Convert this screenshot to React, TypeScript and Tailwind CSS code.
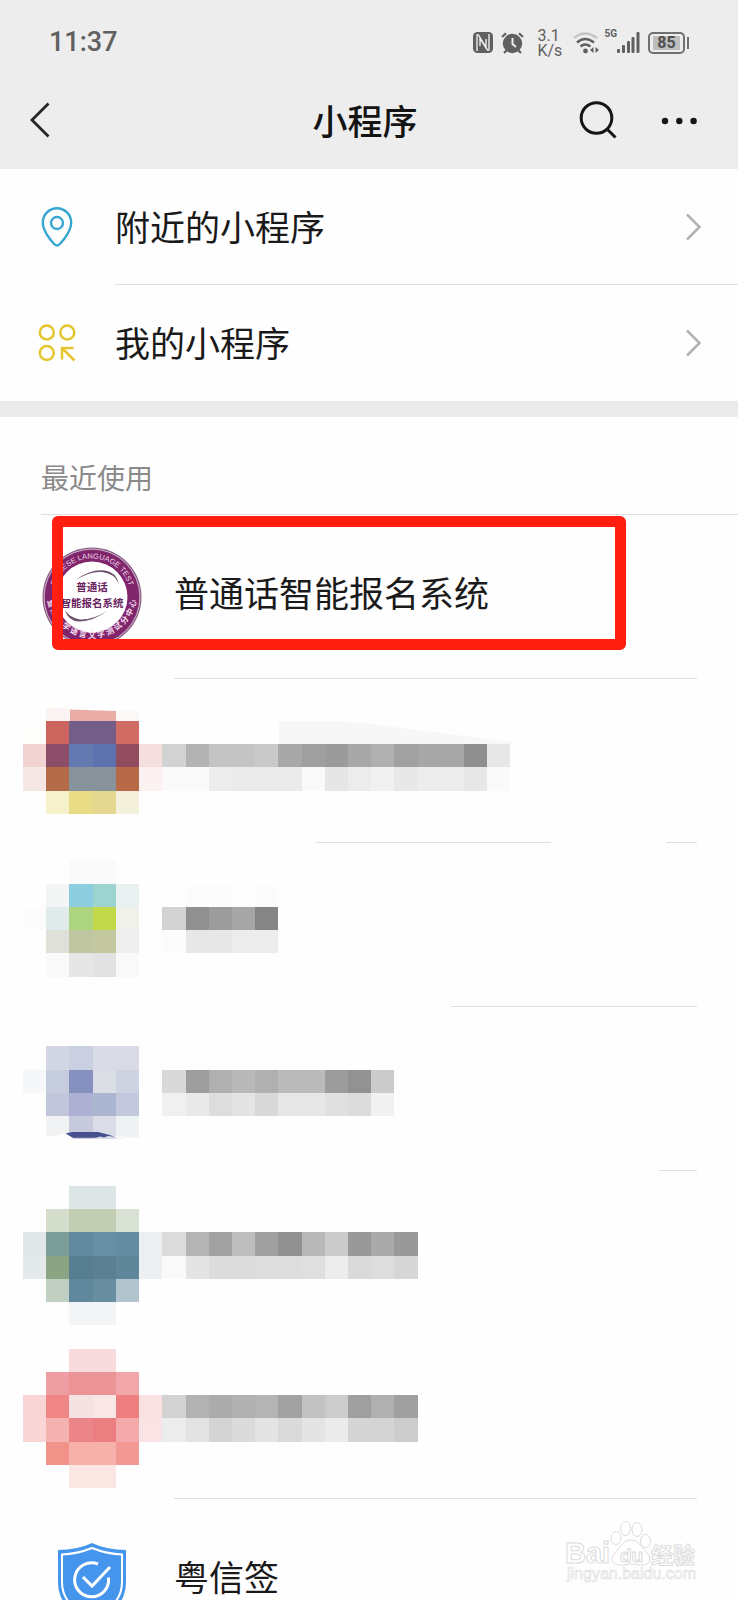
import React from "react";

type Cell = string | null;

interface HiddenApp {
  id: string;
  top: number;
  avatarRow: number;
  avatar: Cell[][];
  nameRow: number;
  name: Cell[][];
  divider: React.ReactNode;
}

const CELL_W = 23.2;
const CELL_H = 23.25;

const line = "h-px bg-[#dedede]";

const hiddenApps: HiddenApp[] = [
  {
    id: "a",
    top: 679,
    avatarRow: 31,
    avatar: [
      ["#fdfdfc", "#cc655d", "#735e88", "#735e88", "#d06c64", null],
      ["#f2d3d1", "#8b4d67", "#6379b0", "#5b72ae", "#914c60", "#f5dfdf"],
      ["#f5e7e4", "#b46b48", "#87929a", "#87929a", "#b86a48", "#faf1f0"],
      [null, "#f5f1cb", "#e8dc86", "#e4d890", "#f3f1dc", null],
    ],
    nameRow: 32,
    name: [
      ["#d2d2d2", "#b3b3b3", "#c4c4c4", "#c4c4c4", "#c9c9c9", "#a8a8a8", "#9f9f9f", "#9b9b9b", "#a8a8a8", "#b0b0b0", "#a1a1a1", "#a7a7a7", "#a7a7a7", "#8f8f8f", "#e7e7e7"],
      ["#fafafa", "#fafafa", "#ededed", "#ebebeb", "#ebebeb", "#ebebeb", "#f9f9f9", "#e6e6e6", "#ececec", "#f1f1f1", "#e8e8e8", "#ededed", "#ececec", "#e7e7e7", "#fafafa"],
    ],
    divider: (
      <>
        <span className={`${line} ml-[316px] w-[235px]`} />
        <span className={`${line} ml-auto mr-[41px] w-[31px]`} />
      </>
    ),
  },
  {
    id: "b",
    top: 843,
    avatarRow: 37,
    avatar: [
      [null, null, "#fafafa", "#fafafa", null, null],
      [null, "#f3f4f4", "#8ccde0", "#9ed4cf", "#e8f1ef", null],
      ["#fcfcfc", "#e2ebeb", "#add57f", "#c3d94c", "#f0f1ea", null],
      ["#fdfdfd", "#dfe0d8", "#c1c6a2", "#c3c8a1", "#eeeeee", null],
      [null, "#f9f9f9", "#e6e6e6", "#e2e2e2", "#f9f9f9", null],
    ],
    nameRow: 38,
    name: [
      [null, "#fcfcfc", "#fcfcfc", "#fdfdfd", "#fcfcfc"],
      ["#d2d2d2", "#909090", "#9c9c9c", "#a6a6a6", "#858585"],
      ["#fcfcfc", "#e7e7e7", "#e7e7e7", "#ececec", "#ededed"],
    ],
    divider: <span className={`${line} ml-[451px] mr-[41px] flex-1`} />,
  },
  {
    id: "c",
    top: 1007,
    avatarRow: 45,
    avatar: [
      [null, "#d2d5e3", "#cbd0e0", "#d9dbe6", "#d8dae6", null],
      ["#f6f7f8", "#c5ccdc", "#8590be", "#dcdee6", "#ced3e1", null],
      [null, "#c1c6da", "#aeb0d3", "#acb5cf", "#c4c8dc", null],
      [null, "#f0f2f3", "#c7c9dd", "#dadce7", "#eff2f5", null],
    ],
    nameRow: 46,
    name: [
      ["#d9d9d9", "#9e9e9e", "#b0b0b0", "#b9b9b9", "#b0b0b0", "#bbbbbb", "#bbbbbb", "#9c9c9c", "#929292", "#cbcbcb"],
      ["#f0f0f0", "#e9e9e9", "#dddddd", "#e4e4e4", "#d9d9d9", "#e7e7e7", "#e7e7e7", "#e0e0e0", "#dcdcdc", "#f1f1f1"],
    ],
    divider: <span className={`${line} ml-auto mr-[41px] w-[38px]`} />,
  },
  {
    id: "d",
    top: 1171,
    avatarRow: 51,
    avatar: [
      [null, null, "#dde5e7", "#dde5e7", null, null],
      [null, "#d5decc", "#c3cdb2", "#c3cdb2", "#d8e1d3", null],
      ["#e1e7e9", "#7b9f98", "#6189a0", "#678ea2", "#648ba1", "#ebeff2"],
      ["#e4e9eb", "#8ba584", "#567d90", "#5b8093", "#60869a", "#ecf0f3"],
      [null, "#c1d0c3", "#5f889c", "#688da1", "#b1c4cd", null],
      [null, null, "#f2f4f5", "#f2f4f5", null, null],
    ],
    nameRow: 53,
    name: [
      ["#dcdcdc", "#b4b4b4", "#a2a2a2", "#bebebe", "#a0a0a0", "#919191", "#b9b9b9", "#cbcbcb", "#999999", "#aaaaaa", "#999999"],
      ["#f9f9f9", "#e4e4e4", "#dcdcdc", "#dcdcdc", "#dedede", "#dddddd", "#dfdfdf", "#ececec", "#dadada", "#dddddd", "#d6d6d6"],
    ],
    divider: <span className="ml-[163px] mr-[41px] h-px flex-1 bg-[#fcfcfc]" />,
  },
  {
    id: "e",
    top: 1335,
    avatarRow: 58,
    avatar: [
      [null, null, "#f7dbde", "#f7dbde", null, null],
      [null, "#ee9ea3", "#eb9496", "#eb9496", "#f1a6aa", null],
      ["#f8d4d5", "#f08786", "#f7e2e2", "#f9e6e6", "#ed7f81", "#fae2e3"],
      ["#f9d5d6", "#f4b2b0", "#ec858a", "#ea7e81", "#f4a9aa", "#fae3e4"],
      [null, "#f2938a", "#f5b1aa", "#f5b1aa", "#f29993", null],
      [null, null, "#fae6e2", "#fae6e2", null, null],
    ],
    nameRow: 60,
    name: [
      ["#d2d2d2", "#b2b2b2", "#acacac", "#b1b1b1", "#b4b4b4", "#a2a2a2", "#c2c2c2", "#cccccc", "#9f9f9f", "#b0b0b0", "#a0a0a0"],
      ["#ececec", "#e3e3e3", "#d4d4d4", "#dadada", "#e4e4e4", "#dadada", "#e4e4e4", "#ebebeb", "#d5d5d5", "#d4d4d4", "#cccccc"],
    ],
    divider: <span className={`${line} ml-[174px] mr-[41px] flex-1`} />,
  },
];

function Cells({ cells, x, y }: { cells: Cell[][]; x: number; y: number }) {
  return (
    <g shapeRendering="crispEdges">
      {cells.map((row, r) =>
        row.map((fill, c) =>
          fill ? (
            <rect
              key={`${r}-${c}`}
              x={x + c * CELL_W}
              y={y + r * CELL_H}
              width={CELL_W}
              height={CELL_H}
              fill={fill}
            />
          ) : null
        )
      )}
    </g>
  );
}

function HiddenRow({ app }: { app: HiddenApp }) {
  return (
    <li>
      <div className="flex h-[163px]">
        <svg width="162" height="163" viewBox="0 0 162 163" className="shrink-0" aria-hidden="true">
          <Cells cells={app.avatar} x={23} y={app.avatarRow * CELL_H - app.top} />
          {app.id === "a" && (
            <>
              <path d="M46 29L70 30V42H46z" fill="#faf5f2" />
              <path d="M70 30.5L116 32V42H70z" fill="#eaaca6" />
              <path d="M116 32H139V42H116z" fill="#fbf8f8" />
            </>
          )}
          {app.id === "c" && (
            <>
              <path d="M46 132.5V130L66 126L74 132.5H46zM139 132.5H128L112 129L139 131z" fill="#fefefe" />
              <path d="M65.500 126.500L72 125H98L106 127L115 129.700L108 129L104 130.500L100 129.500L96 130.700H73z" fill="#47508f" />
            </>
          )}
        </svg>
        <svg width="360" height="163" viewBox="0 0 360 163" className="shrink-0" aria-hidden="true">
          {app.id === "a" && <path d="M117 42H171L201 44L349 63V66H117z" fill="#f7f7f7" />}
          <Cells cells={app.name} x={0.4} y={app.nameRow * CELL_H - app.top} />
        </svg>
      </div>
      <div className="flex h-px">{app.divider}</div>
    </li>
  );
}

function StatusBar() {
  return (
    <div className="flex h-[85px] items-center justify-between px-[49px] text-[#606060]">
      <time className="font-[Roboto,sans-serif] text-[27px] leading-none font-medium">11:37</time>
      <div className="flex items-center font-[Roboto,sans-serif]">
        <svg width="20" height="21" viewBox="0 0 20 21" aria-label="NFC">
          <rect width="20" height="21" rx="4.5" fill="#606060" />
          <path d="M4 19V3.5Q4 2 5.5 3L13 15.500V7" fill="none" stroke="#ededed" strokeWidth="1.4" />
          <path d="M7 14V6.500L14.500 18Q16 19 16 17.500V2" fill="none" stroke="#ededed" strokeWidth="1.4" />
        </svg>
        <svg className="ml-2" width="23" height="22" viewBox="0 0 23 22" aria-label="Alarm">
          <circle cx="11.5" cy="11.5" r="9.7" fill="#606060" />
          <path d="M11.5 6V12L15 15" fill="none" stroke="#ededed" strokeWidth="2" />
          <path d="M1 5L5 1.2M22 5L18 1.2M3 21L6 18M20 21L17 18" stroke="#606060" strokeWidth="2.2" />
        </svg>
        <div className="ml-[13px] w-[24px] text-[16px] leading-[15px]">
          <div>3.1</div>
          <div>K/s</div>
        </div>
        <svg className="ml-3" width="27" height="22" viewBox="0 0 27 22" fill="none" aria-label="Wi-Fi">
          <path d="M1 6Q12 -3 24 6" stroke="#c4c4c4" strokeWidth="2.2" />
          <path d="M4 10.5Q12 3.5 21 10.5M7.5 14.5Q12 10.5 17.5 14.5" stroke="#606060" strokeWidth="2.6" />
          <circle cx="12.5" cy="19" r="2.4" fill="#606060" />
          <path d="M20.5 15V21L17 18zM22.5 15V21L26 18z" fill="#606060" />
        </svg>
        <span className="ml-1 self-start text-[10px] leading-[11px] font-bold">5G</span>
        <svg width="23" height="22" viewBox="0 0 23 22" fill="#606060" aria-label="Signal">
          <rect x="0" y="17" width="3" height="4" rx="1" />
          <rect x="5" y="13" width="3" height="8" rx="1" />
          <rect x="10" y="9" width="3" height="12" rx="1" />
          <rect x="14.5" y="5" width="3" height="16" rx="1" />
          <rect x="19.5" y="0" width="3" height="21" rx="1" />
        </svg>
        <div className="ml-2 flex items-center gap-[2px]">
          <div className="flex h-[22px] w-[37px] items-center justify-center rounded-[5px] border-2 border-[#707070]">
            <span className="flex h-[14px] w-[27px] items-center justify-center bg-[#bdbdbd] text-[16px] leading-none font-bold text-[#505050]">
              85
            </span>
          </div>
          <span className="h-[12px] w-[2px] bg-[#707070]" />
        </div>
      </div>
    </div>
  );
}

function NavBar() {
  return (
    <nav className="grid h-[69px] grid-cols-[1fr_auto_1fr] items-center">
      <button type="button" aria-label="返回" className="ml-[28px] w-[24px]">
        <svg width="24" height="36" viewBox="0 0 24 36" fill="none" stroke="#242424" strokeWidth="2.8">
          <path d="M20.5 1.5L4 18L20.500 34.500" />
        </svg>
      </button>
      <h1 className="pr-2 text-[35px] leading-[50px] font-medium text-[#141414]">小程序</h1>
      <div className="mr-[40px] flex items-center justify-end gap-[43px]">
        <button type="button" aria-label="搜索">
          <svg width="38" height="38" viewBox="0 0 38 38" fill="none" stroke="#161616" strokeWidth="3">
            <circle cx="17.5" cy="17" r="15.3" />
            <path d="M28 28L36.5 36.5" />
          </svg>
        </button>
        <button type="button" aria-label="更多">
          <svg width="38" height="38" viewBox="0 0 38 38" fill="#161616">
            <circle cx="5" cy="20" r="3.2" />
            <circle cx="19.3" cy="20" r="3.2" />
            <circle cx="33.6" cy="20" r="3.2" />
          </svg>
        </button>
      </div>
    </nav>
  );
}

function PinIcon() {
  return (
    <svg width="38" height="40" viewBox="0 0 38 40" fill="none" stroke="#36a6d2" strokeWidth="2.4">
      <path d="M19 38.500C17 38.500 4.800 26 4.800 15.500A14.200 14.200 0 0 1 33.200 15.500C33.200 26 21 38.500 19 38.500z" />
      <circle cx="19" cy="16" r="6" />
    </svg>
  );
}

function MineIcon() {
  return (
    <svg width="38" height="40" viewBox="0 0 38 40" fill="none" stroke="#e3c62f" strokeWidth="2.5">
      <circle cx="8.8" cy="9.5" r="7" />
      <circle cx="29.3" cy="9.5" r="7" />
      <circle cx="8.8" cy="30" r="7" />
      <path d="M24 36.5V25H35.500M24.500 25.500L36.500 37.500" />
    </svg>
  );
}

function MenuLink({ icon, label, divided }: { icon: React.ReactNode; label: string; divided?: boolean }) {
  return (
    <a href="#" className="flex h-[116px] pl-[38px]">
      <span className="flex w-[38px] shrink-0 items-center">{icon}</span>
      <span
        className={`ml-[39px] flex flex-1 items-center justify-between border-b pr-[36px] ${
          divided ? "border-[#dedede]" : "border-transparent"
        }`}
      >
        <span className="pb-[2px] text-[35px] leading-[50px] text-[#1a1a1a]">{label}</span>
        <svg width="17" height="28" viewBox="0 0 17 28" fill="none" stroke="#b2b2b2" strokeWidth="2.5">
          <path d="M2 1.5L14.5 14L2 26.5" />
        </svg>
      </span>
    </a>
  );
}

function TestLogo() {
  return (
    <svg width="100" height="100" viewBox="0 0 100 100" aria-hidden="true">
      <defs>
        <path id="ring-top" d="M11.500 50A38.500 38.500 0 0 1 88.500 50" />
        <path id="ring-bottom" d="M5 46A45 45 0 1 0 95 46" />
      </defs>
      <circle cx="50" cy="50" r="49.5" fill="#8b5c86" />
      <circle cx="50" cy="50" r="48" fill="none" stroke="#d9c3d7" strokeWidth="0.8" />
      <circle cx="50" cy="50" r="47" fill="#80246b" />
      <circle cx="50" cy="50" r="35.5" fill="#fff" />
      <text fontSize="7.5" fill="#ecd6e8" textAnchor="middle" className="font-[Liberation_Sans,sans-serif]">
        <textPath href="#ring-top" startOffset="50%">CHINESE LANGUAGE TEST</textPath>
      </text>
      <text fontSize="8" fontWeight="700" fill="#f3dff0" textAnchor="middle">
        <textPath href="#ring-bottom" startOffset="50%">暨 南 大 学 语 言 文 字 测 试 分 中 心</textPath>
      </text>
      <path d="M34 33Q48 22 63 23.500Q74 25 77 37Q72 26 60 25Q48 24 34 33z" fill="#6d5069" />
      <path d="M65 64Q52 74 37 74.500Q26 74 23 63Q28 71 38 72.500Q51 73 65 64z" fill="#6d5069" />
      <g fill="#6a2460" fontWeight="700" fontSize="10.5" textAnchor="middle">
        <text x="50" y="44">普通话</text>
        <text x="50" y="60">智能报名系统</text>
      </g>
    </svg>
  );
}

function ShieldLogo() {
  return (
    <svg width="100" height="100" viewBox="0 0 100 100" aria-hidden="true" fill="none">
      <path d="M50 12Q65 19 84 19V51Q84 79 50 92Q16 79 16 51V19Q35 19 50 12z" fill="#4595ec" />
      <path d="M50 17Q65 23 80 23.500V51Q80 75 50 87Q20 75 20 51V23.500Q35 23 50 17z" stroke="#fff" strokeWidth="2" />
      <path d="M56 33A17 17 0 1 0 66.500 46.500" stroke="#fff" strokeWidth="3" />
      <path d="M41 46L50 55L68 36" stroke="#fff" strokeWidth="3" />
    </svg>
  );
}

function AppRow({ logo, name }: { logo: React.ReactNode; name: string }) {
  return (
    <a href="#" className="flex h-[163px] items-center pl-[42px]">
      {logo}
      <span className="ml-[32px] pb-[10px] text-[35px] leading-[50px] text-[#1a1a1a]">{name}</span>
    </a>
  );
}

function Watermark() {
  return (
    <svg
      className="absolute right-[38px] bottom-[15px]"
      width="136"
      height="68"
      viewBox="0 0 136 68"
      fill="#fff"
      stroke="#dcdcdc"
      strokeWidth="1"
    >
      <g className="font-[Liberation_Sans,Noto_Sans_CJK_SC,sans-serif]" fontWeight="700">
        <text x="1" y="46" fontSize="29">Bai</text>
        <text x="87" y="46" fontSize="22">经验</text>
      </g>
      <path d="M67 23C59 23 56 31 51 36C45 42 49 48 56 48C61 48 63 47 67 47C71 47 74 48 79 48C86 48 88 41 83 36C78 31 75 23 67 23z" />
      <ellipse cx="52" cy="21" rx="5" ry="6.5" />
      <ellipse cx="61.5" cy="11.5" rx="5" ry="7" />
      <ellipse cx="73" cy="12.5" rx="5" ry="7" />
      <ellipse cx="81.5" cy="24" rx="5" ry="6.5" />
      <text x="56" y="45" fontSize="19" fontWeight="700" className="font-[Liberation_Sans,sans-serif]">du</text>
      <text x="3" y="62" fontSize="16" strokeWidth="0.6" className="font-[Liberation_Sans,sans-serif]">
        jingyan.baidu.com
      </text>
    </svg>
  );
}

export default function App() {
  return (
    <div className="relative h-screen overflow-hidden bg-[#fefefe] font-[Noto_Sans_CJK_SC,sans-serif]">
      <header className="bg-[#ededed] pb-[15px]">
        <StatusBar />
        <NavBar />
      </header>

      <main>
        <MenuLink icon={<PinIcon />} label="附近的小程序" divided />
        <MenuLink icon={<MineIcon />} label="我的小程序" />
        <div className="h-4 bg-[#ebebeb]" />

        <section>
          <h2 className="ml-[41px] border-b border-[#dedede] pt-[40px] pb-[16px] text-[28px] leading-[41px] text-[#8a8a8a]">
            最近使用
          </h2>
          <ul>
            <li className="relative">
              <AppRow logo={<TestLogo />} name="普通话智能报名系统" />
              <div className={`${line} mr-[41px] ml-[174px]`} />
              <div className="absolute top-px right-[112px] left-[52px] h-[134px] rounded-[6px] border-[11px] border-[#ff1e10]" />
            </li>
            {hiddenApps.map((app) => (
              <HiddenRow key={app.id} app={app} />
            ))}
            <li>
              <AppRow logo={<ShieldLogo />} name="粤信签" />
            </li>
          </ul>
        </section>
      </main>
      <Watermark />
    </div>
  );
}
